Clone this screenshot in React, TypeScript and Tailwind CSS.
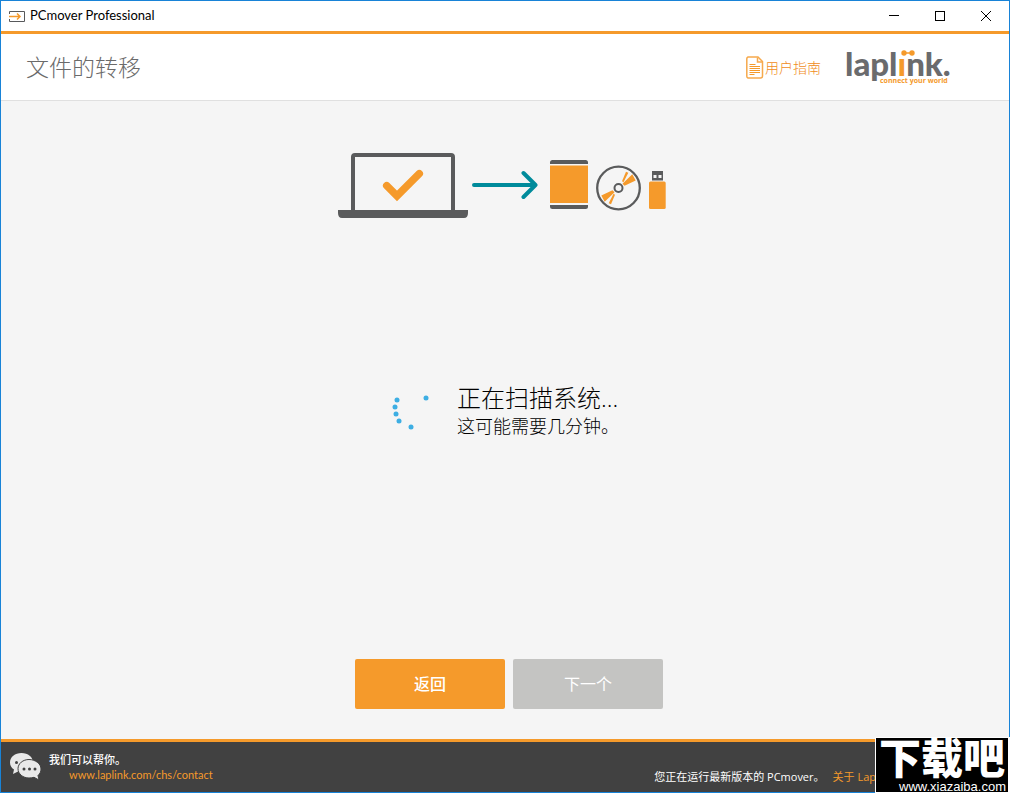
import React from 'react';

function TitleBar() {
  return (
    <div className="flex h-[30px] items-center bg-white pl-2">
      <svg width="16" height="11" viewBox="0 0 16 11" fill="none" aria-hidden="true">
        <path d="M.5 3V.5h15v10H.5V8" stroke="#58595b" />
        <path d="M0 5.5h11M8 2.5l3 3-3 3" stroke="#f59a2b" strokeWidth="1.5" />
      </svg>
      <span className="ml-[5px] flex-1 pb-0.5 font-['Lato'] text-[13px] leading-4 text-black">PCmover Professional</span>
      <button type="button" aria-label="Minimize" className="flex h-full w-[46px] items-center justify-center">
        <svg width="10" height="10" viewBox="0 0 10 10" stroke="#000" shapeRendering="crispEdges">
          <path d="M0 4.5h10" />
        </svg>
      </button>
      <button type="button" aria-label="Maximize" className="flex h-full w-[46px] items-center justify-center">
        <svg width="10" height="10" viewBox="0 0 10 10" fill="none" stroke="#000" shapeRendering="crispEdges">
          <path d="M.5 .5h9v9h-9z" />
        </svg>
      </button>
      <button type="button" aria-label="Close" className="flex h-full w-[46px] items-center justify-center">
        <svg width="10" height="10" viewBox="0 0 10 10" stroke="#000">
          <path d="M0 0l10 10M10 0L0 10" />
        </svg>
      </button>
    </div>
  );
}

function Logo() {
  return (
    <svg width="107" height="50" viewBox="0 0 107 50" role="img" aria-label="laplink. connect your world">
      <text x="0" y="34" fontSize="33" fontWeight="900" fill="#6a6b6d" className="font-['Lato']">
        lapl<tspan fill="#f59a2b">ı</tspan>nk.
      </text>
      <path d="M59 11h8" stroke="#f59a2b" strokeWidth="1.5" />
      <circle cx="59" cy="11" r="2.7" fill="#f59a2b" />
      <circle cx="67" cy="11" r="2.7" fill="#f59a2b" />
      <text x="35" y="41" fontSize="7" fontWeight="700" fill="#f59a2b" className="font-['Open_Sans']">
        connect your world
      </text>
    </svg>
  );
}

function Header() {
  return (
    <header className="flex h-[67px] items-center border-b border-[#e0e0e0] bg-white pr-[57px] pl-[25px]">
      <h1 className="flex-1 text-[23px] leading-8 font-light text-[#6a6a6a]">文件的转移</h1>
      <a href="#guide" className="mr-6 flex items-center pt-px text-[14px] leading-5 font-light text-[#f08c1a]">
        <svg width="19" height="24" viewBox="0 0 19 24" fill="none" stroke="#f6a94c" aria-hidden="true">
          <path d="M2 1h10l4.500 4.500V20a2 2 0 0 1-2 2H2a2 2 0 0 1-1.200-2V3A2 2 0 0 1 2 1z" strokeWidth="1.5" />
          <path d="M11.500 1.500V6h5" strokeWidth="1.5" />
          <path d="M3.500 8.500h6M3.500 10.500h10.500M3.500 12.500h10.500M3.500 14.500h10.500M3.500 16.500h10.500M3.500 18.500h5" stroke="#f59a2b" />
        </svg>
        用户指南
      </a>
      <Logo />
    </header>
  );
}

// Laptop -> tablet, disc and USB stick
function TransferDrawing() {
  return (
    <svg width="334" height="66" viewBox="0 0 334 66" fill="none" aria-hidden="true">
      <path d="M15 58V5q0-2 2-2h96q2 0 2 2v53" stroke="#5a5b5c" strokeWidth="4" />
      <path d="M0 58h130v3q0 5-4 5H4q-4 0-4-5z" fill="#5a5b5c" />
      <path d="M48.7 33.700L59 44l22.300-22.300" stroke="#f59a2b" strokeWidth="7.5" strokeLinecap="round" />
      <path d="M136 33h61M185.500 21l12 12-12 12" stroke="#008b9b" strokeWidth="4" strokeLinecap="round" strokeLinejoin="round" />
      <path d="M212 12v-1.500q0-2.500 2.500-2.500h33q2.500 0 2.500 2.500V12z" fill="#5a5b5c" />
      <path d="M212 13.500h38V51h-38z" fill="#f59a2b" />
      <path d="M212 53v1.500q0 2.500 2.500 2.500h33q2.500 0 2.500-2.500V53z" fill="#5a5b5c" />
      <circle cx="280.5" cy="36" r="21.3" stroke="#5a5b5c" strokeWidth="2.3" />
      <circle cx="280.5" cy="36" r="4" stroke="#5a5b5c" strokeWidth="2" />
      <g fill="#f59a2b">
        <path d="M294.300 22.300l3.400 6.200-11.200 5.300-2-2z" />
        <path d="M288 19.700l2.300 1-4.800 9.600-1.500-1z" />
        <path d="M266.700 49.700l-3.400-6.200 11.200-5.300 2 2z" />
        <path d="M273 52.300l-2.300-1 4.800-9.600 1.500 1z" />
      </g>
      <path d="M314 19h11v9.500h-11z" fill="#5a5b5c" />
      <path d="M315.500 23h3v3h-3zM320.500 23h3v3h-3z" fill="#f5f5f5" />
      <rect x="311" y="29.5" width="16.7" height="27.5" rx="1.5" fill="#f59a2b" />
    </svg>
  );
}

const dots = [
  [6, 8],
  [4, 15],
  [5, 22],
  [8, 29],
  [20, 35],
  [35, 6],
];

function Spinner() {
  return (
    <svg width="40" height="40" viewBox="0 0 40 40" fill="#3daee3" aria-hidden="true">
      {dots.map(([x, y]) => (
        <circle key={`${x}-${y}`} cx={x} cy={y} r="2.5" />
      ))}
    </svg>
  );
}

function Footer() {
  return (
    <footer className="flex h-[53px] border-t-[3px] border-[#f59a2b] bg-[#414141] pr-[133px] pl-[9px] text-[11px]">
      <svg width="31" height="28" viewBox="0 0 31 28" className="mt-[11px]" aria-hidden="true">
        <path d="M11.500 0C5 0 0 4 0 9.500c0 3 1.500 5.500 4 7L3 21l5-2.500q3 .7 6 0C18 18 23 15 23 9.500S18 0 11.500 0z" fill="#e9e9e9" />
        <path d="M19 6.500c-6 0-11 4-11 9.200S13 25 19 25q2.500 0 5-.7l5 2.700-1-4.500c2-1.700 3-4 3-6.500 0-5.500-6-9.500-12-9.500z" fill="#e9e9e9" stroke="#414141" />
        <g fill="#414141">
          <circle cx="6.5" cy="9.5" r="1.5" />
          <circle cx="14" cy="16" r="1.5" />
          <circle cx="19.5" cy="16" r="1.5" />
          <circle cx="25" cy="16" r="1.5" />
        </g>
      </svg>
      <div className="flex-1 pt-[10px] pl-2 leading-[15px]">
        <p className="font-medium text-white">我们可以帮你。</p>
        <a href="#contact" className="ml-5 block font-['Lato'] text-[#f59a2b]">www.laplink.com/chs/contact</a>
      </div>
      <div className="flex items-end gap-2 pb-[7px] leading-4">
        <p className="text-white">您正在运行最新版本的 PCmover。</p>
        <a href="#about" className="text-[#f59a2b]">关于 Lap</a>
      </div>
    </footer>
  );
}

export default function App() {
  return (
    <div className="relative flex min-h-screen flex-col border border-[#1883d7] bg-[#f5f5f5] font-['Open_Sans','Noto_Sans_CJK_SC',sans-serif]">
      <TitleBar />
      <div className="h-[3px] bg-[#f59a2b]" />
      <Header />

      <main className="flex flex-1 flex-col items-center pt-[51px] pb-[30px]">
        <TransferDrawing />
        <div className="flex flex-1 items-center gap-[26px] pb-[54px]">
          <Spinner />
          <div className="text-black">
            <p className="text-[24px] leading-7 font-light">正在扫描系统...</p>
            <p className="text-[18px] leading-7 font-light">这可能需要几分钟。</p>
          </div>
        </div>
        <div className="flex gap-2 pl-2 text-[16px] text-white">
          <button type="button" className="h-[50px] w-[150px] rounded-[2px] bg-[#f59a2b] font-medium">返回</button>
          <button type="button" disabled className="h-[50px] w-[150px] rounded-[2px] bg-[#c4c4c2]">下一个</button>
        </div>
      </main>

      <Footer />

      {/* Site badge, sits over the window corner */}
      <div className="absolute -right-px -bottom-px h-14 w-[135px] border border-r-2 border-white bg-black text-center text-white">
        <p className="text-[42px] leading-10 font-black">下载吧</p>
        <p className="pr-0.5 text-right font-['Liberation_Sans'] text-[13px] leading-[18px]">www.xiazaiba.com</p>
      </div>
    </div>
  );
}
